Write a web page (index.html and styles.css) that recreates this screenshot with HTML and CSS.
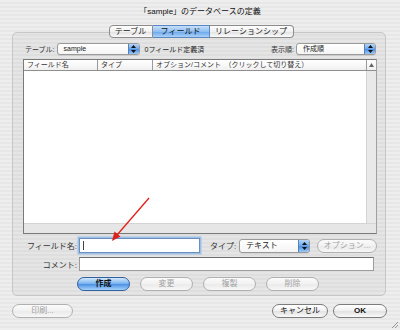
FILE: index.html
```html
<!DOCTYPE html>
<html lang="ja">
    <head>
        <meta charset="UTF-8">
        <title>「sample」のデータベースの定義</title>
        <link rel="stylesheet" href="styles.css">
    </head>
    <body>
        <div class="window">
            <div class="titlebar">「sample」のデータベースの定義</div>

            <div class="tabs">
                <span class="tab tab-table">テーブル</span>
                <span class="tab tab-field active">フィールド</span>
                <span class="tab tab-rel">リレーションシップ</span>
            </div>

            <div class="group">
                <div class="top-row">
                    <span class="small-label">テーブル:</span>
                    <div class="popup popup-table">
                        <span class="popup-text">sample</span>
                        <span class="popup-arrows">
                            <svg width="5" height="8" viewBox="0 0 5 8"><path d="M2.5 0L5 3H0z M2.5 8L5 5H0z" fill="#111"/></svg>
                        </span>
                    </div>
                    <span class="count">0フィールド定義済</span>
                    <span class="spacer"></span>
                    <span class="small-label">表示順:</span>
                    <div class="popup popup-order">
                        <span class="popup-text">作成順</span>
                        <span class="popup-arrows">
                            <svg width="5" height="8" viewBox="0 0 5 8"><path d="M2.5 0L5 3H0z M2.5 8L5 5H0z" fill="#111"/></svg>
                        </span>
                    </div>
                </div>

                <div class="list">
                    <div class="list-header">
                        <span class="col col-name">フィールド名</span>
                        <span class="col col-type">タイプ</span>
                        <span class="col col-opt">オプション/コメント　（クリックして切り替え）</span>
                        <span class="col col-scroll">
                            <svg width="5" height="4" viewBox="0 0 5 4"><path d="M2.5 0L5 4H0z" fill="#666"/></svg>
                        </span>
                    </div>
                    <div class="list-body">
                        <div class="list-rows"></div>
                        <div class="vscroll"></div>
                    </div>
                    <div class="hscroll"></div>
                </div>

                <div class="field-row">
                    <span class="field-label">フィールド名:</span>
                    <div class="textbox focused name-box"><span class="caret"></span></div>
                    <span class="type-label">タイプ:</span>
                    <div class="popup popup-type">
                        <span class="popup-text">テキスト</span>
                        <span class="popup-arrows">
                            <svg width="5" height="8" viewBox="0 0 5 8"><path d="M2.5 0L5 3H0z M2.5 8L5 5H0z" fill="#111"/></svg>
                        </span>
                    </div>
                    <button class="btn disabled options-btn">オプション...</button>
                </div>

                <div class="field-row comment-row">
                    <span class="field-label">コメント:</span>
                    <div class="textbox comment-box"></div>
                </div>

                <div class="action-row">
                    <button class="btn default">作成</button>
                    <button class="btn disabled">変更</button>
                    <button class="btn disabled">複製</button>
                    <button class="btn disabled">削除</button>
                </div>
            </div>

            <div class="bottom-row">
                <button class="btn disabled print-btn">印刷...</button>
                <span class="spacer"></span>
                <button class="btn cancel-btn">キャンセル</button>
                <button class="btn ok-btn">OK</button>
            </div>

            <svg class="grip" width="7" height="7" viewBox="0 0 7 7">
                <path d="M7 1L1 7 M7 4L4 7" stroke="#999" stroke-width="1"/>
            </svg>

            <svg class="arrow" width="60" height="60" viewBox="0 0 60 60">
                <line x1="50" y1="2" x2="18" y2="39" stroke="#e0201a" stroke-width="1.3"/>
                <path d="M13 45L15.5 35.5L21.5 40.5z" fill="#e0201a"/>
            </svg>
        </div>
    </body>
</html>
```

FILE: styles.css
```css
body {
    margin: 0;
    font-family: "Liberation Sans", "Noto Sans CJK JP", sans-serif;
    color: #222;
}
.window {
    position: relative;
    width: 400px;
    height: 330px;
    overflow: hidden;
    background: repeating-linear-gradient(to bottom, #eeeeee 0px, #eeeeee 2px, #e7e7e7 2px, #e7e7e7 4px);
}
.titlebar {
    height: 22px;
    line-height: 24px;
    text-align: center;
    font-size: 8px;
    color: #111;
}
.tabs {
    display: flex;
    justify-content: center;
    margin: 3px 0 0 2px;
    position: relative;
    z-index: 1;
}
.tab {
    height: 11px;
    line-height: 11px;
    font-size: 8px;
    text-align: center;
    border: 1px solid #8c8c8c;
    border-left: none;
    background: linear-gradient(to bottom, #ffffff 0%, #f1f1f1 50%, #e2e2e2 55%, #fbfbfb 100%);
    color: #222;
}
.tab-table {
    width: 42px;
    border-left: 1px solid #8c8c8c;
    border-radius: 4px 0 0 4px;
}
.tab-field {
    width: 56px;
}
.tab-rel {
    width: 83px;
    border-radius: 0 4px 4px 0;
}
.tab.active {
    background: linear-gradient(to bottom, #c6e0fb 0%, #8fbff2 50%, #6ea9ec 55%, #a9d2fa 100%);
    border-color: #5b86c0;
    color: #111;
}
.group {
    margin: -6px 14px 0 12px;
    border: 1px solid #c6c6c6;
    border-radius: 5px;
    background: rgba(0, 0, 0, 0.035);
    padding: 10px 8px 0 10px;
    height: 252px;
}
.top-row {
    display: flex;
    align-items: center;
    height: 12px;
    padding: 0 1px 0 2px;
}
.small-label {
    font-size: 7px;
    color: #333;
    margin-right: 2px;
}
.count {
    font-size: 7px;
    margin-left: 5px;
    color: #222;
}
.spacer {
    flex: 1;
}
.popup {
    display: flex;
    height: 10px;
    border: 1px solid #9a9a9a;
    border-radius: 3px;
    background: linear-gradient(to bottom, #ffffff, #f4f4f4);
    box-shadow: 0 1px 0 rgba(0, 0, 0, 0.08);
    overflow: hidden;
}
.popup-table {
    width: 81px;
}
.popup-order {
    width: 78px;
}
.popup-type {
    width: 69px;
    height: 12px;
}
.popup-text {
    flex: 1;
    font-size: 7px;
    line-height: 10px;
    padding-left: 6px;
}
.popup-type .popup-text {
    font-size: 8px;
    line-height: 12px;
}
.popup-arrows {
    width: 10px;
    display: flex;
    align-items: center;
    justify-content: center;
    background: linear-gradient(to bottom, #b5d5f7 0%, #6aa6ec 50%, #4f92e4 55%, #9cc9f6 100%);
    border-left: 1px solid #5580b8;
}
.list {
    margin-top: 4px;
    height: 173px;
    border: 1px solid #7a7a7a;
    border-right-color: #a0a0a0;
    background: #fff;
    display: flex;
    flex-direction: column;
}
.list-header {
    display: flex;
    height: 10px;
    border-bottom: 1px solid #8f8f8f;
    background: linear-gradient(to bottom, #ffffff, #f0f0f0);
}
.col {
    font-size: 7px;
    line-height: 10px;
    color: #333;
    padding-left: 3px;
    border-right: 1px solid #9a9a9a;
    box-sizing: border-box;
    white-space: nowrap;
}
.col-name {
    width: 74px;
}
.col-type {
    width: 55px;
}
.col-opt {
    width: 214px;
}
.col-scroll {
    flex: 1;
    border-right: none;
    display: flex;
    align-items: center;
    justify-content: center;
    padding: 0;
}
.list-body {
    flex: 1;
    display: flex;
}
.list-rows {
    flex: 1;
}
.vscroll {
    width: 9px;
    background: #e9e9e9;
    border-left: 1px solid #d4d4d4;
}
.hscroll {
    height: 9px;
    background: #e6e6e6;
    border-top: 1px solid #d4d4d4;
}
.field-row {
    display: flex;
    align-items: center;
    margin-top: 4px;
    height: 15px;
}
.field-label {
    width: 54px;
    text-align: right;
    font-size: 8px;
    color: #333;
    margin-right: 2px;
}
.textbox {
    height: 13px;
    border: 1px solid #9c9c9c;
    border-top-color: #6f6f6f;
    background: #fff;
}
.name-box {
    width: 119px;
    display: flex;
    align-items: center;
}
.focused {
    border-color: #6d8fbd;
    box-shadow: 0 0 0 1.5px #9ec0e8;
}
.caret {
    width: 1px;
    height: 9px;
    margin-left: 3px;
    background: #444;
}
.type-label {
    font-size: 8px;
    color: #333;
    margin: 0 3px 0 10px;
}
.comment-row {
    margin-top: 4px;
    height: 14px;
}
.comment-box {
    width: 293px;
    height: 12px;
}
.btn {
    font-family: inherit;
    height: 14px;
    padding: 0;
    font-size: 8px;
    line-height: 12px;
    border: 1px solid #7c7c7c;
    border-radius: 7px;
    background: linear-gradient(to bottom, #ffffff 0%, #f2f2f2 45%, #e2e2e2 55%, #fafafa 100%);
    color: #111;
    box-sizing: border-box;
}
.btn.disabled {
    border-color: #b0b0b0;
    color: #a2a2a2;
    background: linear-gradient(to bottom, #fbfbfb 0%, #f1f1f1 50%, #ebebeb 55%, #f7f7f7 100%);
}
.btn.default {
    border-color: #31609f;
    background: linear-gradient(to bottom, #d3e8fd 0%, #7db6f0 45%, #4f92e3 55%, #a6d4fb 100%);
    font-weight: bold;
    color: #111;
}
.options-btn {
    width: 60px;
    margin-left: 7px;
}
.action-row {
    display: flex;
    gap: 10px;
    margin-top: 6px;
    padding-left: 54px;
}
.action-row .btn {
    width: 53px;
}
.bottom-row {
    display: flex;
    margin-top: 8px;
    padding: 0 13px 0 12px;
}
.print-btn {
    width: 61px;
}
.cancel-btn {
    width: 56px;
    margin-right: 5px;
}
.ok-btn {
    width: 54px;
    font-weight: bold;
}
.grip {
    position: absolute;
    right: 2px;
    bottom: 2px;
}
.arrow {
    position: absolute;
    left: 99px;
    top: 196px;
}
```
